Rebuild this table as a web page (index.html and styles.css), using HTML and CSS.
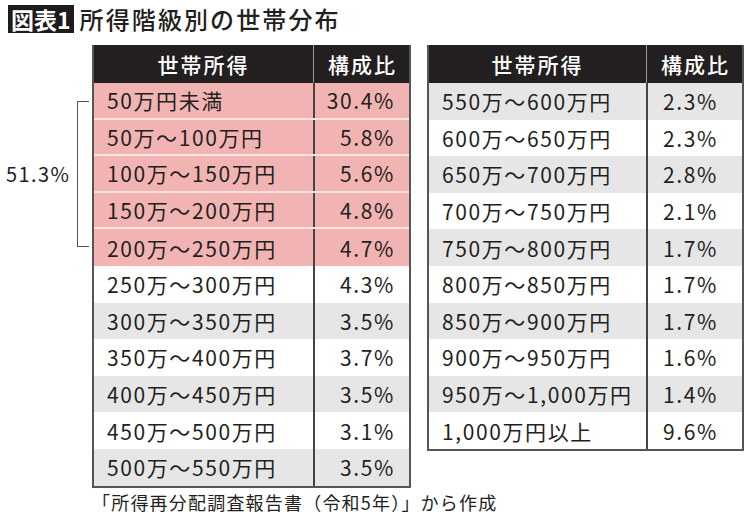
FILE: index.html
```html
<!DOCTYPE html>
<html lang="ja">
<head>
<meta charset="utf-8">
<link rel="stylesheet" href="styles.css">
</head>
<body>
<div class="page">
  <h1 class="title"><span class="badge">図表1</span><span class="title-text">所得階級別の世帯分布</span></h1>
  <div class="tables">
    <div class="side">
      <span class="side-label">51.3%</span>
      <span class="bracket"></span>
    </div>
    <div class="tbl tbl-left">
      <div class="row head"><div class="c1">世帯所得</div><div class="c2">構成比</div></div>
      <div class="row pink"><div class="c1">50万円未満</div><div class="c2">30.4%</div></div>
      <div class="row pink"><div class="c1">50万～100万円</div><div class="c2">5.8%</div></div>
      <div class="row pink"><div class="c1">100万～150万円</div><div class="c2">5.6%</div></div>
      <div class="row pink"><div class="c1">150万～200万円</div><div class="c2">4.8%</div></div>
      <div class="row pink"><div class="c1">200万～250万円</div><div class="c2">4.7%</div></div>
      <div class="row white"><div class="c1">250万～300万円</div><div class="c2">4.3%</div></div>
      <div class="row gray"><div class="c1">300万～350万円</div><div class="c2">3.5%</div></div>
      <div class="row white"><div class="c1">350万～400万円</div><div class="c2">3.7%</div></div>
      <div class="row gray"><div class="c1">400万～450万円</div><div class="c2">3.5%</div></div>
      <div class="row white"><div class="c1">450万～500万円</div><div class="c2">3.1%</div></div>
      <div class="row gray"><div class="c1">500万～550万円</div><div class="c2">3.5%</div></div>
    </div>
    <div class="tbl tbl-right">
      <div class="row head"><div class="c1">世帯所得</div><div class="c2">構成比</div></div>
      <div class="row gray"><div class="c1">550万～600万円</div><div class="c2">2.3%</div></div>
      <div class="row white"><div class="c1">600万～650万円</div><div class="c2">2.3%</div></div>
      <div class="row gray"><div class="c1">650万～700万円</div><div class="c2">2.8%</div></div>
      <div class="row white"><div class="c1">700万～750万円</div><div class="c2">2.1%</div></div>
      <div class="row gray"><div class="c1">750万～800万円</div><div class="c2">1.7%</div></div>
      <div class="row white"><div class="c1">800万～850万円</div><div class="c2">1.7%</div></div>
      <div class="row gray"><div class="c1">850万～900万円</div><div class="c2">1.7%</div></div>
      <div class="row white"><div class="c1">900万～950万円</div><div class="c2">1.6%</div></div>
      <div class="row gray"><div class="c1">950万～1,000万円</div><div class="c2">1.4%</div></div>
      <div class="row white"><div class="c1">1,000万円以上</div><div class="c2">9.6%</div></div>
    </div>
  </div>
  <p class="source">「所得再分配調査報告書（令和5年）」から作成</p>
</div>
</body>
</html>
```

FILE: styles.css
```css
* { box-sizing: border-box; }
html, body { margin: 0; padding: 0; background: #fff; }
body {
  width: 750px;
  height: 518px;
  overflow: hidden;
  font-family: "Noto Sans CJK JP", "Noto Sans", sans-serif;
  color: #231f20;
}
.page { padding: 5px 0 0 8px; }
.title {
  margin: 0;
  height: 40px;
  display: flex;
  align-items: flex-start;
  font-weight: 500;
}
.badge {
  display: inline-block;
  background: #1e1b1c;
  color: #fff;
  font-size: 23px;
  font-weight: 700;
  line-height: 28px;
  height: 28px;
  padding: 0 3px 0 3px;
  letter-spacing: 0;
}
.title-text {
  margin-left: 6px;
  font-size: 24px;
  line-height: 28px;
  letter-spacing: 2.1px;
  font-weight: 500;
}
.tables {
  display: flex;
  align-items: flex-start;
}
.side {
  width: 84px;
  display: flex;
  align-items: center;
  padding-top: 56px;
}
.side-label {
  font-size: 20px;
  line-height: 24px;
  letter-spacing: 1.4px;
  width: 71px;
  margin-left: -2px;
}
.bracket {
  width: 12px;
  height: 146px;
  border: 1.5px solid #555;
  border-right: 0;
}
.tbl {
  border: 2px solid #555;
  border-top: 0;
}
.tbl-left { width: 319px; }
.tbl-right { width: 317px; margin-left: 16px; }
.row {
  display: grid;
  grid-template-columns: 219px 1fr;
  height: 36.6px;
  font-size: 21px;
  letter-spacing: 1.6px;
}
.tbl-right .row { grid-template-columns: 217px 1fr; }
.row > div {
  display: flex;
  align-items: center;
}
.c1 { padding-left: 13px; }
.c2 {
  justify-content: flex-end;
  padding-right: 14px;
  border-left: 2px solid #444;
}
.tbl-right .c2 { padding-right: 24px; }
.tbl .head {
  height: 38px;
  background: #231f20;
  color: #fff;
  font-weight: 500;
  letter-spacing: 2px;
}
.tbl .head > div { justify-content: center; padding: 0; }
.tbl .head .c2 { border-left: 1.5px solid #9a9a9a; padding-left: 2px; }
.pink { background: #f2b4b2; border-bottom: 2px solid #fbe3e2; }
.pink:nth-child(6) { border-bottom: 0; }
.white { background: #fff; }
.gray { background: #e6e6e6; }
.source {
  margin: 2px 0 0 84px;
  font-size: 18px;
  line-height: 24px;
  letter-spacing: 1.2px;
}
```
